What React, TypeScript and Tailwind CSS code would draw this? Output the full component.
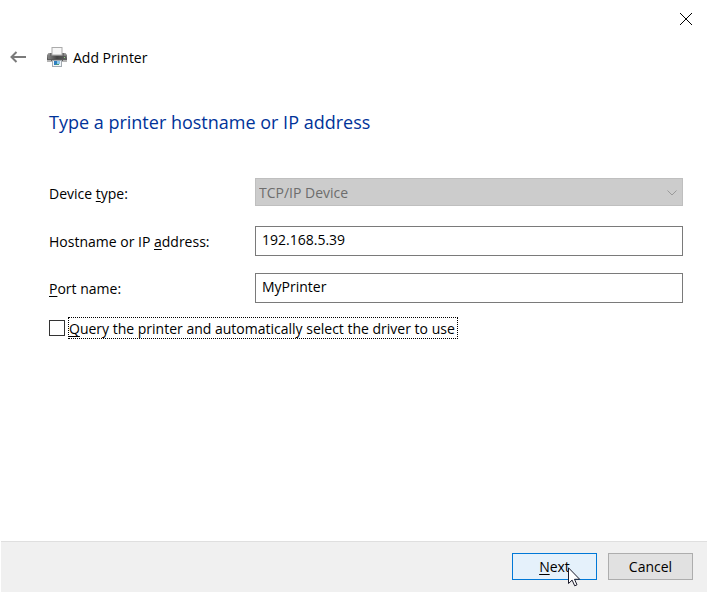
import { useState } from "react";
import type { ReactNode } from "react";

function Key({ children }: { children: ReactNode }) {
  return <span className="underline decoration-1 underline-offset-2">{children}</span>;
}

function PrinterIcon() {
  return (
    <svg width="20" height="20" viewBox="0 0 20 20" aria-hidden="true">
      <defs>
        <linearGradient id="body" x1="0" y1="0" x2="0" y2="1">
          <stop offset="0" stopColor="#9a9a9a" />
          <stop offset="0.4" stopColor="#7c7c7c" />
          <stop offset="0.75" stopColor="#555" />
          <stop offset="1" stopColor="#777" />
        </linearGradient>
        <linearGradient id="slot" x1="0" y1="0" x2="1" y2="0">
          <stop offset="0" stopColor="#858585" />
          <stop offset="0.5" stopColor="#444" />
          <stop offset="1" stopColor="#5f5f5f" />
        </linearGradient>
      </defs>
      <path d="M1.500 6h17l1.500 2v6H0V8z" fill="url(#body)" />
      <rect x="3" y="6" width="14" height="3" fill="#6a6a6a" />
      <rect x="5" y="0.5" width="10" height="7.500" fill="#f7f7f7" stroke="#ababab" />
      <rect x="1" y="9" width="18" height="3" fill="url(#slot)" />
      <rect x="17" y="10" width="1" height="1" fill="#8fdc80" />
      <rect x="0" y="13" width="20" height="2" fill="#b4b4b4" />
      <rect x="4" y="12" width="12" height="2" fill="#5a5a5a" />
      <rect x="5.500" y="13.500" width="9" height="6" fill="#f2f6fa" stroke="#a3abb1" />
      <rect x="7" y="14" width="3" height="4" fill="#2e7fc0" />
      <rect x="10" y="14" width="3" height="3" fill="#8fc9ea" />
      <rect x="9" y="17" width="3" height="1" fill="#4d9b78" />
    </svg>
  );
}

const field =
  "h-[30px] w-full border border-[#7a7a7a] bg-white pr-1.5 pb-1 pl-1.5 text-sm text-black outline-none";
const row = "grid grid-cols-[206px_1fr] items-center";
const button = "h-[27px] w-[85px] border pt-px text-sm text-black";

export default function App() {
  const [host, setHost] = useState("192.168.5.39");
  const [port, setPort] = useState("MyPrinter");

  return (
    <div className="flex min-h-screen flex-col bg-white px-px pb-px font-['Segoe_UI','Open_Sans',sans-serif] text-sm text-black">
      <div className="flex h-[38px] justify-end pr-3.5">
        <button type="button" aria-label="Close" className="flex items-center">
          <svg width="14" height="14" viewBox="0 0 14 14" aria-hidden="true">
            <path d="M1 1l12 12M13 1L1 13" stroke="#000" strokeWidth="1" fill="none" />
          </svg>
        </button>
      </div>

      <header className="flex h-[38px] items-center pl-[9px]">
        <button type="button" aria-label="Back" className="mr-5">
          <svg width="17" height="12" viewBox="0 0 17 12" aria-hidden="true" className="block">
            <path d="M6.500 1L1.500 6l5 5M1.500 6H16" stroke="#7a7a7a" strokeWidth="2" fill="none" />
          </svg>
        </button>
        <PrinterIcon />
        <span className="pt-0.5 pl-1.5">Add Printer</span>
      </header>

      <main className="grow pr-6 pl-12">
        <h1 className="pt-8 text-lg leading-7 text-[#003399]">
          Type a printer hostname or IP address
        </h1>

        <form className="pt-[42px]">
          <div className={row}>
            <label htmlFor="type" className="pt-1">
              Device <Key>t</Key>ype:
            </label>
            <div className="relative">
              <select
                id="type"
                disabled
                className="block h-7 w-full appearance-none border border-[#bfbfbf] bg-[#cccccc] pt-0.5 pl-[3px] text-sm text-[#6d6d6d] opacity-100"
              >
                <option>TCP/IP Device</option>
              </select>
              <svg
                width="10"
                height="6"
                viewBox="0 0 10 6"
                aria-hidden="true"
                className="pointer-events-none absolute top-3 right-1.5"
              >
                <path d="M0.5 0.5L5 5l4.500-4.500" stroke="#9a9a9a" fill="none" />
              </svg>
            </div>
          </div>

          <div className={`${row} pt-5`}>
            <label htmlFor="host" className="pt-0.5">
              Hostname or IP <Key>a</Key>ddress:
            </label>
            <input id="host" className={field} value={host} onChange={(e) => setHost(e.target.value)} />
          </div>

          <div className={`${row} pt-[17px]`}>
            <label htmlFor="port" className="pt-0.5">
              <Key>P</Key>ort name:
            </label>
            <input id="port" className={field} value={port} onChange={(e) => setPort(e.target.value)} />
          </div>

          <div className="flex items-center pt-3.5">
            <input
              id="query"
              type="checkbox"
              className="mr-[3px] size-4 appearance-none border border-[#333] bg-white checked:bg-[#333]"
            />
            <label htmlFor="query" className="h-[22px] border border-dotted border-black pr-0.5 leading-[22px]">
              <Key>Q</Key>uery the printer and automatically select the driver to use
            </label>
          </div>
        </form>
      </main>

      <footer className="flex h-[51px] items-start justify-end gap-[11px] border-t border-[#dfdfdf] bg-[#f0f0f0] pt-[11px] pr-3.5">
        <div className="relative">
          <button type="button" className={`${button} border-[#0078d7] bg-[#e5f1fb]`}>
            <Key>N</Key>ext
          </button>
          <svg
            width="13"
            height="20"
            viewBox="0 0 13 20"
            aria-hidden="true"
            className="pointer-events-none absolute top-3.5 left-14"
          >
            <path
              d="M0.5 0.8v15.700l3.600-3.400 2.600 5.700 2.300-1-2.500-5.500h5.200z"
              fill="#fff"
              stroke="#1a1a2a"
            />
          </svg>
        </div>
        <button type="button" className={`${button} border-[#adadad] bg-[#e1e1e1]`}>
          Cancel
        </button>
      </footer>
    </div>
  );
}
